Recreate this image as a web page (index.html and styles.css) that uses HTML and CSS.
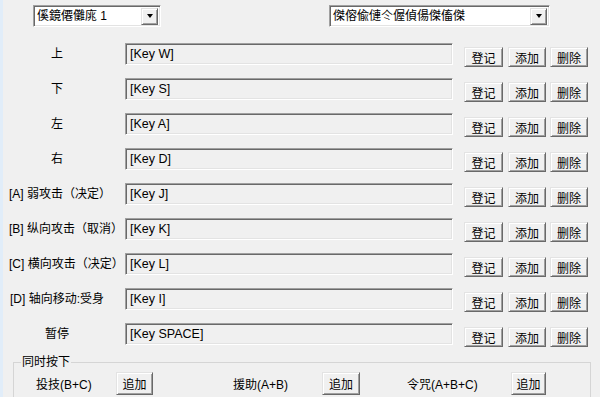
FILE: index.html
```html
<!DOCTYPE html>
<html lang="zh">
<head>
    <meta charset="UTF-8">
    <title>按键设置</title>
    <link rel="stylesheet" href="styles.css">
</head>
<body>
    <div class="window">
        <div class="top">
            <div class="combo combo-player">
                <span class="combo-text">傒鏡僊儺庣 1</span>
                <span class="combo-btn"><i class="arrow"></i></span>
            </div>
            <div class="combo combo-device">
                <span class="combo-text">傑傛偸僆仒偓偵偒傑傗傑</span>
                <span class="combo-btn"><i class="arrow"></i></span>
            </div>
        </div>

        <div class="keys">
            <div class="key-row">
                <span class="key-label">上</span>
                <div class="key-field">[Key W]</div>
                <button class="btn btn-reg">登记</button>
                <button class="btn btn-add">添加</button>
                <button class="btn btn-del">删除</button>
            </div>
            <div class="key-row">
                <span class="key-label">下</span>
                <div class="key-field">[Key S]</div>
                <button class="btn btn-reg">登记</button>
                <button class="btn btn-add">添加</button>
                <button class="btn btn-del">删除</button>
            </div>
            <div class="key-row">
                <span class="key-label">左</span>
                <div class="key-field">[Key A]</div>
                <button class="btn btn-reg">登记</button>
                <button class="btn btn-add">添加</button>
                <button class="btn btn-del">删除</button>
            </div>
            <div class="key-row">
                <span class="key-label">右</span>
                <div class="key-field">[Key D]</div>
                <button class="btn btn-reg">登记</button>
                <button class="btn btn-add">添加</button>
                <button class="btn btn-del">删除</button>
            </div>
            <div class="key-row">
                <span class="key-label">[A] 弱攻击（决定）</span>
                <div class="key-field">[Key J]</div>
                <button class="btn btn-reg">登记</button>
                <button class="btn btn-add">添加</button>
                <button class="btn btn-del">删除</button>
            </div>
            <div class="key-row">
                <span class="key-label">[B] 纵向攻击（取消）</span>
                <div class="key-field">[Key K]</div>
                <button class="btn btn-reg">登记</button>
                <button class="btn btn-add">添加</button>
                <button class="btn btn-del">删除</button>
            </div>
            <div class="key-row">
                <span class="key-label">[C] 横向攻击（决定）</span>
                <div class="key-field">[Key L]</div>
                <button class="btn btn-reg">登记</button>
                <button class="btn btn-add">添加</button>
                <button class="btn btn-del">删除</button>
            </div>
            <div class="key-row">
                <span class="key-label">[D] 轴向移动:受身</span>
                <div class="key-field">[Key I]</div>
                <button class="btn btn-reg">登记</button>
                <button class="btn btn-add">添加</button>
                <button class="btn btn-del">删除</button>
            </div>
            <div class="key-row">
                <span class="key-label">暂停</span>
                <div class="key-field">[Key SPACE]</div>
                <button class="btn btn-reg">登记</button>
                <button class="btn btn-add">添加</button>
                <button class="btn btn-del">删除</button>
            </div>
        </div>

        <fieldset class="group">
            <legend>同时按下</legend>
            <div class="combo-row">
                <span class="combo-label label-throw">投技(B+C)</span>
                <button class="btn btn-append append-throw">追加</button>
                <span class="combo-label label-assist">援助(A+B)</span>
                <button class="btn btn-append append-assist">追加</button>
                <span class="combo-label label-spell">令咒(A+B+C)</span>
                <button class="btn btn-append append-spell">追加</button>
            </div>
        </fieldset>
    </div>
</body>
</html>
```

FILE: styles.css
```css
html, body {
    margin: 0;
    padding: 0;
    height: 100%;
    overflow: hidden;
}
body {
    background-color: #f0f0f0;
    color: #000;
    font-family: "Liberation Sans", "Noto Sans CJK SC", sans-serif;
    font-size: 12px;
}
.window {
    height: 100%;
    box-sizing: border-box;
    border-left: 3px solid #e1edf9;
    padding-top: 5px;
}

/* top selectors */
.top {
    display: flex;
    height: 22px;
}
.combo {
    box-sizing: border-box;
    height: 22px;
    display: flex;
    align-items: center;
    background-color: #fff;
    border: 1px solid;
    border-color: #a0a0a0 #fff #fff #a0a0a0;
    box-shadow: inset 1px 1px #696969, inset -1px -1px #e3e3e3;
    padding: 2px;
}
.combo-player {
    margin-left: 30px;
    width: 128px;
}
.combo-device {
    margin-left: 168px;
    width: 221px;
}
.combo-text {
    flex: 1;
    padding-left: 1px;
    line-height: 16px;
    white-space: nowrap;
    overflow: hidden;
}
.combo-btn {
    box-sizing: border-box;
    width: 17px;
    height: 17px;
    display: flex;
    align-items: center;
    justify-content: center;
    background-color: #f0f0f0;
    border: 1px solid;
    border-color: #e3e3e3 #696969 #696969 #e3e3e3;
    box-shadow: inset 1px 1px #fff, inset -1px -1px #a0a0a0;
}
.arrow {
    width: 0;
    height: 0;
    border-left: 3.5px solid transparent;
    border-right: 3.5px solid transparent;
    border-top: 4px solid #000;
}

/* key rows */
.keys {
    display: flex;
    flex-direction: column;
    gap: 13px;
    margin-top: 16px;
}
.key-row {
    display: flex;
    align-items: flex-start;
    height: 22px;
}
.key-label {
    width: 96px;
    margin-left: 6px;
    text-align: center;
    white-space: nowrap;
    line-height: 22px;
}
.key-field {
    box-sizing: border-box;
    width: 328px;
    height: 22px;
    margin-left: 20px;
    padding: 3px 0 0 4px;
    font-size: 12.5px;
    line-height: 15px;
    background-color: #f0f0f0;
    border: 1px solid;
    border-color: #a0a0a0 #fff #fff #a0a0a0;
    box-shadow: inset 1px 1px #696969, inset -1px -1px #e3e3e3;
}
.btn {
    box-sizing: border-box;
    height: 20px;
    margin-top: 4px;
    padding: 0;
    font: inherit;
    color: #000;
    background-color: #f0f0f0;
    border: 1px solid;
    border-color: #e3e3e3 #696969 #696969 #e3e3e3;
    box-shadow: inset 1px 1px #fff, inset -1px -1px #a0a0a0;
}
.btn-reg {
    margin-left: 11px;
    width: 39px;
}
.btn-add {
    margin-left: 5px;
    width: 38px;
}
.btn-del {
    margin-left: 4px;
    width: 38px;
}

/* simultaneous press group */
.group {
    box-sizing: border-box;
    width: 578px;
    margin: 10px 0 0 10px;
    padding: 0 0 8px 7px;
    border: 1px solid #d5d5d5;
}
.group legend {
    padding: 0 1px;
    line-height: 14px;
}
.combo-row {
    display: flex;
    align-items: center;
    height: 23px;
    margin-top: 3px;
}
.combo-label {
    white-space: nowrap;
}
.btn-append {
    height: 23px;
    margin-top: 0;
}
.label-throw {
    margin-left: 15px;
    width: 80px;
}
.append-throw {
    width: 37px;
}
.label-assist {
    margin-left: 80px;
    width: 89px;
}
.append-assist {
    width: 38px;
}
.label-spell {
    margin-left: 47px;
    width: 104px;
}
.append-spell {
    width: 35px;
}
```
